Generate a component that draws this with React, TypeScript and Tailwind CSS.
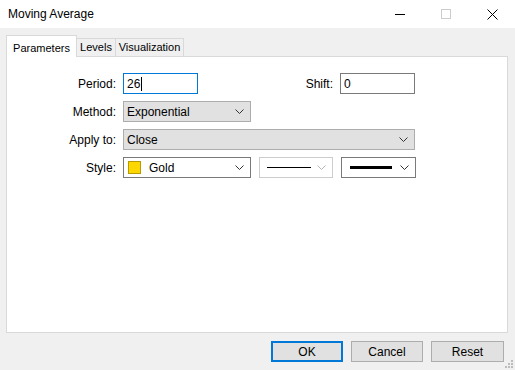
import React from 'react';

function Chevron({ light = false }: { light?: boolean }) {
  return (
    <svg width="9" height="5" viewBox="0 0 9 5" className="shrink-0">
      <path d="M0.5 0.5 L4.5 4.5 L8.5 0.5" fill="none" stroke={light ? '#b5b5b5' : '#333'} strokeWidth="1" />
    </svg>
  );
}

function Combo({
  width,
  children,
  flat = false,
  light = false,
}: {
  width: string;
  children?: React.ReactNode;
  flat?: boolean;
  light?: boolean;
}) {
  const cls = flat
    ? light
      ? 'bg-white border-[#cccccc]'
      : 'bg-white border-[#7a7a7a]'
    : 'bg-[#e1e1e1] border-[#adadad]';
  return (
    <div className={`${width} h-[21px] border ${cls} flex items-center pl-[3px] pr-[6px]`}>
      <div className="flex-1 flex items-center min-w-0">{children}</div>
      <Chevron light={light} />
    </div>
  );
}

export default function App() {
  return (
    <div
      className="relative w-[515px] h-[370px] bg-[#f0f0f0] flex flex-col text-[12px] text-black overflow-hidden"
      style={{ fontFamily: '"Liberation Sans", Arial, sans-serif' }}
    >
      {/* Title bar */}
      <div className="h-[28px] bg-white flex items-center">
        <div className="flex-1 pl-[8px] text-[12px] text-black">Moving Average</div>
        <div className="w-[46px] h-[28px] flex items-center justify-center">
          <div className="w-[10px] h-px bg-black" />
        </div>
        <div className="w-[46px] h-[28px] flex items-center justify-center">
          <div className="w-[10px] h-[10px] border border-[#cccccc]" />
        </div>
        <div className="w-[46px] h-[28px] flex items-center justify-center">
          <svg width="11" height="11" viewBox="0 0 11 11">
            <path d="M0.5 0.5 L10.5 10.5 M10.5 0.5 L0.5 10.5" stroke="#000" strokeWidth="1" />
          </svg>
        </div>
      </div>

      {/* Tabs */}
      <div className="mt-[7px] ml-[6px] h-[22px] flex items-end text-[11px]">
        <div className="relative z-10 h-[22px] w-[71px] bg-white border border-b-0 border-[#d9d9d9] flex items-start justify-center pt-[4px]">
          Parameters
        </div>
        <div className="h-[19px] w-[39px] border border-l-0 border-[#d9d9d9] flex items-center justify-center">
          Levels
        </div>
        <div className="h-[19px] w-[68px] border border-l-0 border-[#d9d9d9] flex items-center justify-center">
          Visualization
        </div>
      </div>

      {/* Panel */}
      <div className="-mt-px ml-[6px] w-[502px] h-[277px] bg-white border border-[#d9d9d9] pt-[16px] flex flex-col gap-[7px]">
        <div className="h-[21px] flex items-center">
          <div className="w-[109px] text-right">Period:</div>
          <div className="ml-[7px] w-[75px] h-[21px] border border-[#0078d7] flex items-center pl-[3px]">
            <span>26</span>
            <span className="w-px h-[14px] bg-black ml-px" />
          </div>
          <div className="w-[135px] text-right">Shift:</div>
          <div className="ml-[7px] w-[75px] h-[21px] border border-[#7a7a7a] flex items-center pl-[3px]">0</div>
        </div>

        <div className="h-[21px] flex items-center">
          <div className="w-[109px] text-right">Method:</div>
          <div className="ml-[7px]">
            <Combo width="w-[128px]">Exponential</Combo>
          </div>
        </div>

        <div className="h-[21px] flex items-center">
          <div className="w-[109px] text-right">Apply to:</div>
          <div className="ml-[7px]">
            <Combo width="w-[292px]">Close</Combo>
          </div>
        </div>

        <div className="h-[21px] flex items-center">
          <div className="w-[109px] text-right">Style:</div>
          <div className="ml-[7px]">
            <Combo width="w-[128px]" flat>
              <span className="w-[13px] h-[13px] bg-[#ffd700] border border-[#b89b00] ml-px" />
              <span className="ml-[8px]">Gold</span>
            </Combo>
          </div>
          <div className="ml-[8px]">
            <Combo width="w-[74px]" flat light>
              <span className="ml-[4px] w-[44px] h-px bg-black" />
            </Combo>
          </div>
          <div className="ml-[8px]">
            <Combo width="w-[75px]" flat>
              <span className="ml-[5px] w-[42px] h-[3px] bg-black" />
            </Combo>
          </div>
        </div>
      </div>

      {/* Buttons */}
      <div className="mt-[8px] pr-[11px] flex justify-end gap-[8px]">
        <button className="w-[72px] h-[21px] bg-[#e1e1e1] border-2 border-[#0078d7] flex items-center justify-center">
          OK
        </button>
        <button className="w-[72px] h-[21px] bg-[#e1e1e1] border border-[#adadad] flex items-center justify-center">
          Cancel
        </button>
        <button className="w-[73px] h-[21px] bg-[#e1e1e1] border border-[#adadad] flex items-center justify-center">
          Reset
        </button>
      </div>

      {/* Resize grip */}
      <svg className="absolute right-[2px] bottom-[2px]" width="10" height="10" viewBox="0 0 10 10">
        <rect x="8" y="2" width="2" height="2" fill="#bcbcbc" />
        <rect x="5" y="5" width="2" height="2" fill="#bcbcbc" />
        <rect x="8" y="5" width="2" height="2" fill="#bcbcbc" />
        <rect x="2" y="8" width="2" height="2" fill="#bcbcbc" />
        <rect x="5" y="8" width="2" height="2" fill="#bcbcbc" />
        <rect x="8" y="8" width="2" height="2" fill="#bcbcbc" />
      </svg>
    </div>
  );
}
